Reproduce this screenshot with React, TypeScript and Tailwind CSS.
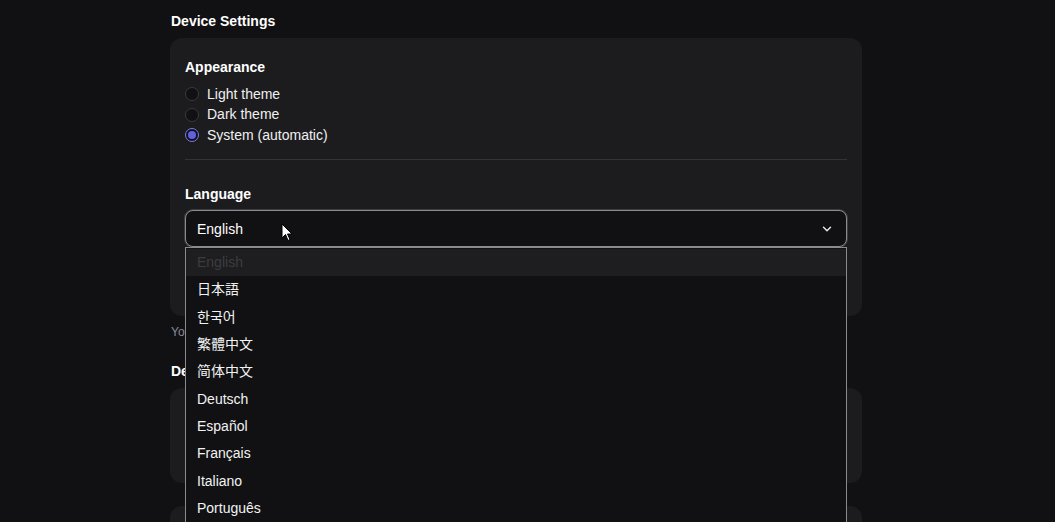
import { ChevronDown } from 'lucide-react';

const languages = [
  'English',
  '日本語',
  '한국어',
  '繁體中文',
  '简体中文',
  'Deutsch',
  'Español',
  'Français',
  'Italiano',
  'Português',
];

const themes = [
  { label: 'Light theme', checked: false },
  { label: 'Dark theme', checked: false },
  { label: 'System (automatic)', checked: true },
];

const Radio = ({ checked }: { checked: boolean }) => (
  <span
    className={`flex h-[14px] w-[14px] items-center justify-center rounded-full border ${
      checked ? 'border-[#7c7cf0] bg-[#111113]' : 'border-[#3a3a3e] bg-[#111113]'
    }`}
  >
    {checked && <span className="h-[8px] w-[8px] rounded-full bg-[#6060e0]" />}
  </span>
);

export default function App() {
  return (
    <div
      className="relative h-[522px] w-full overflow-hidden bg-[#111113] text-white"
      style={{ fontFamily: '"Liberation Sans", "Noto Sans CJK JP", "Noto Sans CJK KR", sans-serif' }}
    >
      <div className="ml-[170px] w-[692px] pt-[12px]">
        <h2 className="pl-px text-[14px] font-bold leading-[18px]">Device Settings</h2>

        <div className="mt-[8px] rounded-[12px] bg-[#1c1c1f] px-[15px] pt-[20px] pb-[69px]">
          <h3 className="text-[14px] font-bold leading-[18px]">Appearance</h3>
          <div className="mt-[8px] flex flex-col">
            {themes.map((t) => (
              <label key={t.label} className="flex h-[20.5px] items-center gap-[8px] text-[14px]">
                <Radio checked={t.checked} />
                <span className="text-[#f0f0f0]">{t.label}</span>
              </label>
            ))}
          </div>
          <div className="mt-[13px] h-px w-full bg-[#333338]" />

          <h3 className="mt-[25px] text-[14px] font-bold leading-[18px]">Language</h3>
          <div className="relative mt-[7px]">
            <div className="flex h-[37px] items-center justify-between rounded-[8px] border border-[#8a8a8f] bg-[#111113] pt-[2px] pl-[11px] pr-[12px] shadow-[0_0_0_1px_#3c3c40] text-[14px]">
              <span>English</span>
              <ChevronDown size={14} strokeWidth={2.5} className="text-[#e8e8e8]" />
            </div>
          </div>
        </div>

        <p className="mt-[8px] pl-px text-[12px] leading-[16px] text-[#8a8a9a]">You</p>
        <h2 className="mt-[22px] pl-px text-[14px] font-bold leading-[18px]">Device</h2>
        <div className="mt-[8px] h-[95px] rounded-[12px] bg-[#1c1c1f]" />
        <div className="mt-[23px] h-[60px] rounded-[12px] bg-[#1c1c1f]" />
      </div>

      {/* open native list */}
      <ul className="absolute left-[185px] top-[247px] w-[662px] border border-[#8a8a8a] bg-[#111113] text-[14px]">
        {languages.map((l, i) => (
          <li
            key={l}
            className={`flex h-[27.3px] items-center pl-[11px] ${
              i === 0 ? 'mt-px bg-[#1e1e21] text-[#3c3c40]' : 'text-[#f2f2f2]'
            }`}
          >
            {l}
          </li>
        ))}
      </ul>

      {/* mouse pointer */}
      <svg className="absolute left-[281px] top-[223px]" width="12" height="19" viewBox="0 0 12 19">
        <path d="M1 1 L1 15 L4.5 11.5 L7 17.5 L9 16.5 L6.5 11 L11 11 Z" fill="#fff" stroke="#000" strokeWidth="1" />
      </svg>
    </div>
  );
}
